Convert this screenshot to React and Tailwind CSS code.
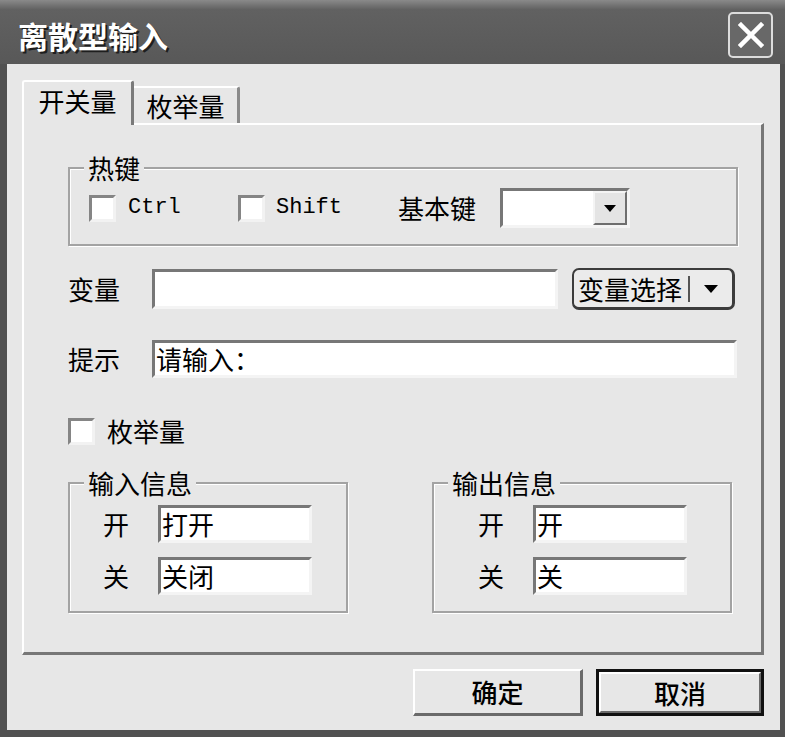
import React from 'react'

// Windows-classic style 3D edges
function Sunken({ className = '', children }) {
  return (
    <div className={`bg-white border-[3px] border-t-[#777] border-l-[#777] border-r-[#f4f4f4] border-b-[#f4f4f4] ${className}`}>
      {children}
    </div>
  )
}

function CheckBox() {
  return <span className="block w-[27px] h-[27px] shrink-0 bg-white border-[3px] border-t-[#858585] border-l-[#858585] border-r-[#f2f2f2] border-b-[#f2f2f2]" />
}

function Triangle() {
  return (
    <svg width="14" height="8" viewBox="0 0 14 8">
      <path d="M0 0 L14 0 L7 8 Z" fill="#000" />
    </svg>
  )
}

function Group({ title, className = '', children }) {
  return (
    <fieldset className={`border-2 border-[#a3a3a3] shadow-[inset_1px_1px_0_#fff,1px_1px_0_#fff] ${className}`}>
      <legend className="ml-[14px] px-[4px] bg-[#e7e7e7] text-[26px] leading-[32px]">{title}</legend>
      {children}
    </fieldset>
  )
}

function InfoRow({ label, value }) {
  return (
    <div className="flex items-center h-[38px]">
      <span className="w-[55px] text-[26px] leading-none">{label}</span>
      <Sunken className="w-[154px] h-[38px] flex items-center pl-[1px]">
        <span className="text-[26px] leading-none">{value}</span>
      </Sunken>
    </div>
  )
}

export default function App() {
  return (
    <div className="w-[785px] h-[737px] overflow-hidden bg-[#515151] flex flex-col text-black font-['Noto_Sans_CJK_SC',sans-serif]">
      {/* Title bar */}
      <div className="h-[64px] shrink-0 flex items-center justify-between pl-[18px] pr-[12px] pt-[6px] bg-linear-to-b from-[#8a8a8a] via-[#616161] via-15% to-[#585858]">
        <span className="text-white text-[30px] font-bold leading-none [text-shadow:2px_2px_0_#1e1e1e]">离散型输入</span>
        <button className="w-[45px] h-[46px] rounded-[5px] border-2 border-[#dcdcdc] bg-[#686868] flex items-center justify-center">
          <svg width="26" height="26" viewBox="0 0 26 26">
            <path d="M3 3 L23 23 M23 3 L3 23" stroke="#fff" strokeWidth="4.5" strokeLinecap="square" />
          </svg>
        </button>
      </div>

      {/* Body */}
      <div className="flex-1 ml-[7px] mr-[5px] mb-[7px] bg-[#e7e7e7] flex flex-col pl-[15px] pr-[16px] pt-[16px]">
        {/* Tabs */}
        <div className="flex items-end h-[43px]">
          <div className="relative z-10 -mb-[2px] w-[112px] h-[45px] bg-[#e7e7e7] border-t-2 border-l-2 border-r-[3px] border-t-white border-l-white border-r-[#7a7a7a] rounded-t-[3px] flex items-center justify-center pb-[6px]">
            <span className="text-[26px] leading-none">开关量</span>
          </div>
          <div className="w-[106px] h-[37px] border-t-2 border-r-[3px] border-t-white border-r-[#8a8a8a] rounded-tr-[3px] flex items-center justify-center">
            <span className="text-[26px] leading-none">枚举量</span>
          </div>
        </div>

        {/* Tab panel */}
        <div className="w-[742px] h-[532px] border-t-2 border-l-2 border-r-[3px] border-b-[3px] border-t-white border-l-white border-r-[#777] border-b-[#777] flex flex-col pl-[44px] pt-[27px]">
          {/* Hotkey group */}
          <Group title="热键" className="w-[670px] pb-[16px]">
            <div className="flex items-center h-[40px] mt-[4px] pl-[19px]">
              <CheckBox />
              <span className="ml-[12px] w-[110px] text-[22px] leading-none font-['Liberation_Mono',monospace]">Ctrl</span>
              <CheckBox />
              <span className="ml-[11px] w-[122px] text-[22px] leading-none font-['Liberation_Mono',monospace]">Shift</span>
              <span className="w-[102px] text-[26px] leading-none">基本键</span>
              <div className="w-[130px] h-[40px] flex border-[3px] border-t-[#777] border-l-[#777] border-r-[#f4f4f4] border-b-[#f4f4f4]">
                <div className="flex-1 bg-white" />
                <div className="w-[34px] bg-[#e4e4e4] border-2 border-t-[#f4f4f4] border-l-[#f4f4f4] border-r-[#6e6e6e] border-b-[#6e6e6e] flex items-center justify-center">
                  <svg width="12" height="7" viewBox="0 0 12 7">
                    <path d="M0 0 L12 0 L6 7 Z" fill="#000" />
                  </svg>
                </div>
              </div>
            </div>
          </Group>

          {/* Variable */}
          <div className="flex items-center mt-[22px] h-[42px]">
            <span className="w-[84px] text-[26px] leading-none">变量</span>
            <Sunken className="w-[406px] h-[40px]" />
            <button className="ml-[14px] w-[163px] h-[42px] rounded-[7px] border-2 border-[#3c3c3c] border-r-[3px] border-b-[3px] bg-[#ebebeb] flex items-center pl-[4px]">
              <span className="text-[26px] leading-none">变量选择</span>
              <span className="ml-[6px] w-[2px] h-[26px] bg-[#555]" />
              <span className="flex-1 flex justify-center">
                <Triangle />
              </span>
            </button>
          </div>

          {/* Prompt */}
          <div className="flex items-center mt-[30px] h-[38px]">
            <span className="w-[84px] text-[26px] leading-none">提示</span>
            <Sunken className="w-[585px] h-[38px] flex items-center pl-[1px]">
              <span className="text-[26px] leading-none">请输入：</span>
            </Sunken>
          </div>

          {/* Enum checkbox */}
          <div className="flex items-center mt-[39px] h-[28px]">
            <CheckBox />
            <span className="ml-[12px] text-[26px] leading-none">枚举量</span>
          </div>

          {/* In / out info */}
          <div className="flex mt-[22px]">
            <Group title="输入信息" className="w-[280px] pb-[16px]">
              <div className="flex flex-col gap-[14px] pl-[33px] pt-[6px]">
                <InfoRow label="开" value="打开" />
                <InfoRow label="关" value="关闭" />
              </div>
            </Group>
            <Group title="输出信息" className="ml-[84px] w-[300px] pb-[16px]">
              <div className="flex flex-col gap-[14px] pl-[44px] pt-[6px]">
                <InfoRow label="开" value="开" />
                <InfoRow label="关" value="关" />
              </div>
            </Group>
          </div>
        </div>

        {/* Dialog buttons */}
        <div className="flex justify-end mt-[14px]">
          <button className="w-[170px] h-[47px] bg-[#e7e7e7] border-2 border-r-[3px] border-b-[3px] border-t-white border-l-white border-r-[#6a6a6a] border-b-[#6a6a6a] flex items-center justify-center">
            <span className="text-[26px] leading-none font-medium">确定</span>
          </button>
          <button className="ml-[13px] w-[168px] h-[47px] border-[3px] border-[#111] bg-[#e7e7e7]">
            <span className="w-full h-full flex items-center justify-center border-2 border-t-white border-l-white border-r-[#6a6a6a] border-b-[#6a6a6a]">
              <span className="text-[26px] leading-none font-medium">取消</span>
            </span>
          </button>
        </div>
      </div>
    </div>
  )
}
